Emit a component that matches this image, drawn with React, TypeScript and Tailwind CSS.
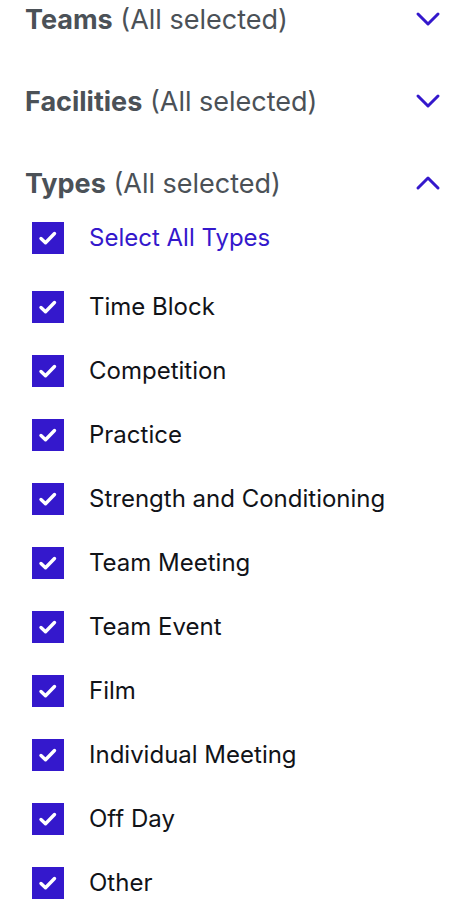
const types = [
  "Time Block",
  "Competition",
  "Practice",
  "Strength and Conditioning",
  "Team Meeting",
  "Team Event",
  "Film",
  "Individual Meeting",
  "Off Day",
  "Other",
];

function Check() {
  return (
    <div className="flex h-8 w-8 shrink-0 items-center justify-center bg-[#3418cc]">
      <svg width="32" height="32" viewBox="0 0 32 32" fill="none">
        <path
          d="M9 16.5l4.5 4.2 9-9.2"
          stroke="white"
          strokeWidth="3.4"
          strokeLinecap="round"
          strokeLinejoin="round"
        />
      </svg>
    </div>
  );
}

function Chevron({ up }: { up?: boolean }) {
  return (
    <svg width="26" height="16" viewBox="0 0 26 16" fill="none" className="text-[#3418cc]">
      <path
        d={up ? "M3 13L13 3l10 10" : "M3 3l10 10 10-10"}
        stroke="currentColor"
        strokeWidth="3"
        strokeLinecap="round"
        strokeLinejoin="round"
      />
    </svg>
  );
}

function Header({ title, open }: { title: string; open?: boolean }) {
  return (
    <div className="flex h-[38px] items-center justify-between">
      <p className="text-[27px] leading-none text-[#4b5157]">
        <span className="font-bold">{title}</span> (All selected)
      </p>
      <Chevron up={open} />
    </div>
  );
}

export default function App() {
  return (
    <div className="min-h-screen bg-white pl-[25px] pr-[15px] font-['Inter',sans-serif]">
      <Header title="Teams" />
      <div className="mt-[44px]">
        <Header title="Facilities" />
      </div>
      <div className="mt-[44px]">
        <Header title="Types" open />
        <div className="mt-[20px] flex h-8 items-center gap-[25px] pl-[7px]">
          <Check />
          <span className="text-[24px] leading-none text-[#3418cc]">Select All Types</span>
        </div>
        <div className="mt-[37px] flex flex-col gap-8 pl-[7px]">
          {types.map((t) => (
            <div key={t} className="flex h-8 items-center gap-[25px]">
              <Check />
              <span className="text-[24px] leading-none text-[#111318]">{t}</span>
            </div>
          ))}
        </div>
      </div>
    </div>
  );
}
